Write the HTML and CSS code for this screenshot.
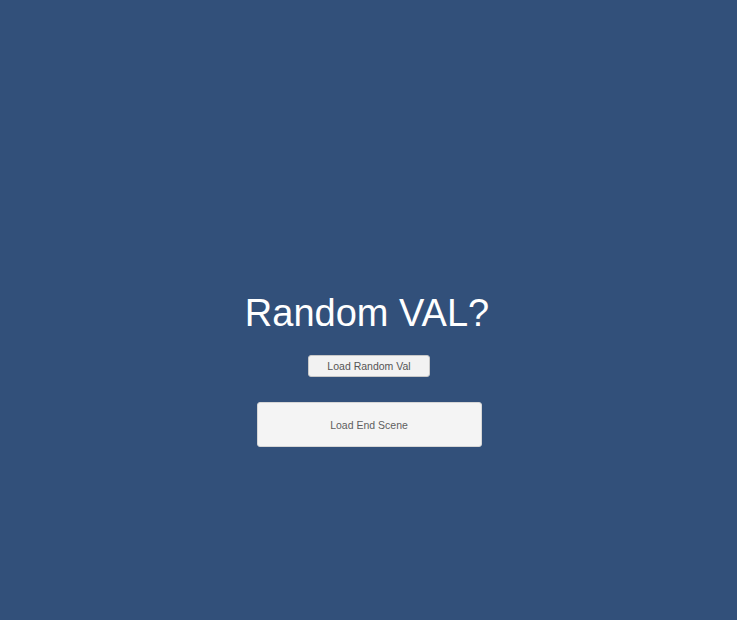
FILE: index.html
```html
<!DOCTYPE html>
<html>
<head>
<meta charset="utf-8">
<link rel="stylesheet" href="styles.css">
</head>
<body>
<main class="screen">
  <h1 class="title">Random VAL?</h1>
  <button class="btn btn-small">Load Random Val</button>
  <button class="btn btn-large">Load End Scene</button>
</main>
</body>
</html>
```
FILE: styles.css
```css
html, body {
  margin: 0;
  padding: 0;
  height: 100%;
}
body {
  background: #32507a;
  font-family: "Liberation Sans", Arial, sans-serif;
  overflow: hidden;
}
.screen {
  display: flex;
  flex-direction: column;
  align-items: center;
  padding-top: 294px;
  padding-left: 1px;
}
.title {
  margin: 0;
  font-size: 38px;
  line-height: 38px;
  font-weight: normal;
  color: #ffffff;
  margin-left: -4px;
}
.btn {
  font-family: "Liberation Sans", Arial, sans-serif;
  font-size: 10.5px;
  color: #555555;
  background: #f4f4f4;
  border: 1px solid #c8c8c8;
  border-radius: 3px;
  padding: 0;
  display: flex;
  align-items: center;
  justify-content: center;
}
.btn-small {
  margin-top: 23px;
  width: 122px;
  height: 22px;
  background: #f2f2f2;
}
.btn-large {
  margin-top: 25px;
  width: 225px;
  height: 45px;
  border-color: #d6d6d6;
  color: #5e5e5e;
}
```
